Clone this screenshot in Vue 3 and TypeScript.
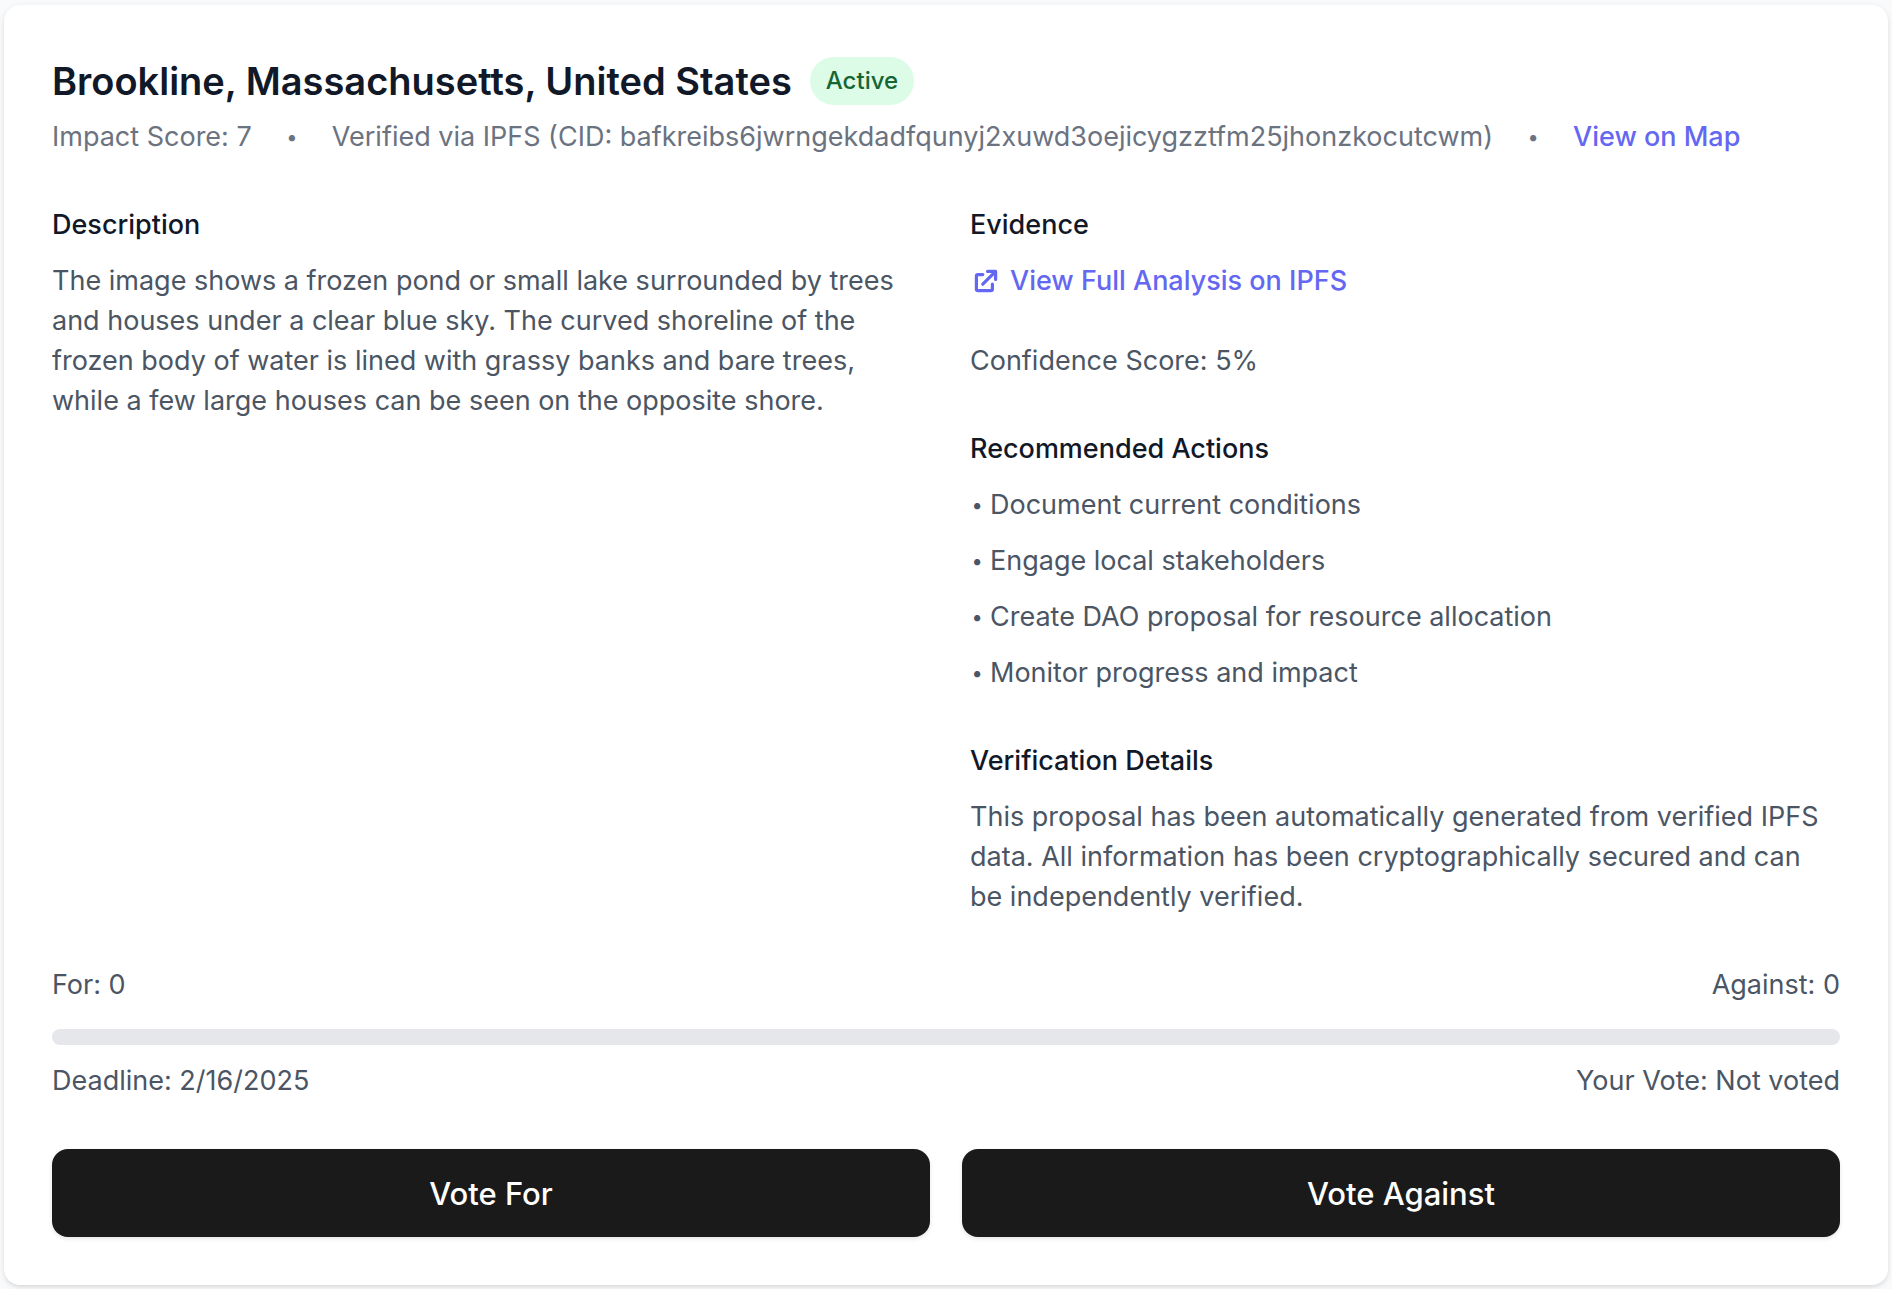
<script setup lang="ts">
import { computed, ref } from 'vue'

const cid = 'bafkreibs6jwrngekdadfqunyj2xuwd3oejicygzztfm25jhonzkocutcwm'

const actions: string[] = [
  'Document current conditions',
  'Engage local stakeholders',
  'Create DAO proposal for resource allocation',
  'Monitor progress and impact',
]

const votesFor = ref(0)
const votesAgainst = ref(0)
const choice = ref<'For' | 'Against' | null>(null)

const forShare = computed(() => {
  const total = votesFor.value + votesAgainst.value
  return total === 0 ? 0 : (votesFor.value / total) * 100
})

function vote(side: 'For' | 'Against') {
  if (choice.value) return
  choice.value = side
  if (side === 'For') votesFor.value++
  else votesAgainst.value++
}
</script>

<template>
  <main class="page">
    <article class="card">
      <header>
        <div class="title-row">
          <h1>Brookline, Massachusetts, United States</h1>
          <span class="badge">Active</span>
        </div>
        <div class="meta">
          <span>Impact Score: 7</span>
          <span class="sep">•</span>
          <span>Verified via IPFS (CID: {{ cid }})</span>
          <span class="sep">•</span>
          <a href="#map">View on Map</a>
        </div>
      </header>

      <div class="columns">
        <section>
          <h2>Description</h2>
          <p>
            The image shows a frozen pond or small lake surrounded by trees and houses under a clear
            blue sky. The curved shoreline of the frozen body of water is lined with grassy banks and
            bare trees, while a few large houses can be seen on the opposite shore.
          </p>
        </section>

        <div class="details">
          <section>
            <h2>Evidence</h2>
            <a class="evidence-link" href="#analysis">
              <svg viewBox="0 0 20 20" fill="currentColor" aria-hidden="true">
                <path d="M11 3a1 1 0 100 2h2.586l-6.293 6.293a1 1 0 101.414 1.414L15 6.414V9a1 1 0 102 0V4a1 1 0 00-1-1h-5z" />
                <path d="M5 5a2 2 0 00-2 2v8a2 2 0 002 2h8a2 2 0 002-2v-3a1 1 0 10-2 0v3H5V7h3a1 1 0 000-2H5z" />
              </svg>
              View Full Analysis on IPFS
            </a>
            <p class="confidence">Confidence Score: 5%</p>
          </section>
          <section>
            <h2>Recommended Actions</h2>
            <ul>
              <li v-for="action in actions" :key="action"><span class="bullet">•</span>{{ action }}</li>
            </ul>
          </section>
          <section>
            <h2>Verification Details</h2>
            <p>
              This proposal has been automatically generated from verified IPFS data. All information
              has been cryptographically secured and can be independently verified.
            </p>
          </section>
        </div>
      </div>

      <div class="tally">
        <div class="row">
          <span>For: {{ votesFor }}</span>
          <span>Against: {{ votesAgainst }}</span>
        </div>
        <div class="track"><div class="fill" :style="{ width: forShare + '%' }"></div></div>
        <div class="row">
          <span>Deadline: 2/16/2025</span>
          <span>Your Vote: {{ choice ?? 'Not voted' }}</span>
        </div>
      </div>

      <div class="buttons">
        <button type="button" @click="vote('For')">Vote For</button>
        <button type="button" @click="vote('Against')">Vote Against</button>
      </div>
    </article>
  </main>
</template>

<style>
body {
  background: #f9fafb;
}
</style>

<style scoped>
.page {
  padding: 5px 4px 4px;
  font-family: Inter, "Liberation Sans", sans-serif;
  font-size: 27px;
  line-height: 40px;
  color: #4b5563;
}

.card {
  padding: 48px;
  border-radius: 16px;
  background: #fff;
  box-shadow: 0 2px 6px rgba(0, 0, 0, 0.1), 0 2px 4px -2px rgba(0, 0, 0, 0.1);
}

h1,
h2,
p,
ul {
  margin: 0;
}

.title-row {
  display: flex;
  align-items: center;
  gap: 18px;
}

h1 {
  font-size: 38px;
  line-height: 56px;
  font-weight: 600;
  color: #111827;
}

.badge {
  padding: 8px 16px;
  border-radius: 24px;
  background: #dcfce7;
  color: #166534;
  font-size: 24px;
  line-height: 32px;
  font-weight: 500;
}

.meta {
  display: flex;
  flex-wrap: wrap;
  column-gap: 33px;
  margin-top: 8px;
  color: #6b7280;
}

.sep,
.bullet {
  width: 14px;
  font-size: 20px;
  text-align: center;
}

a {
  color: #6467f2;
  font-weight: 500;
  text-decoration: none;
}

.columns {
  display: grid;
  grid-template-columns: 1fr 1fr;
  gap: 48px;
  margin-top: 48px;
}

h2 {
  margin-bottom: 16px;
  font-size: 27px;
  line-height: 40px;
  font-weight: 500;
  color: #111827;
}

.details {
  display: flex;
  flex-direction: column;
  gap: 48px;
}

.evidence-link {
  display: flex;
  align-items: center;
  gap: 8px;
}

.evidence-link svg {
  width: 32px;
  height: 32px;
}

.confidence {
  margin-top: 40px;
}

ul {
  display: flex;
  flex-direction: column;
  gap: 16px;
  padding: 0;
  list-style: none;
}

li {
  display: flex;
  gap: 6px;
}

.tally {
  margin-top: 48px;
}

.row {
  display: flex;
  justify-content: space-between;
}

.track {
  height: 16px;
  margin: 24px 0 16px;
  border-radius: 8px;
  background: #e5e7eb;
  overflow: hidden;
}

.fill {
  height: 100%;
  background: #6467f2;
}

.buttons {
  display: grid;
  grid-template-columns: 1fr 1fr;
  gap: 32px;
  margin-top: 48px;
}

button {
  height: 88px;
  border: 0;
  border-radius: 16px;
  background: #1a1a1a;
  box-shadow: 0 2px 4px rgba(0, 0, 0, 0.1);
  color: #fff;
  font-family: inherit;
  font-size: 31px;
  font-weight: 500;
  cursor: pointer;
}
</style>
